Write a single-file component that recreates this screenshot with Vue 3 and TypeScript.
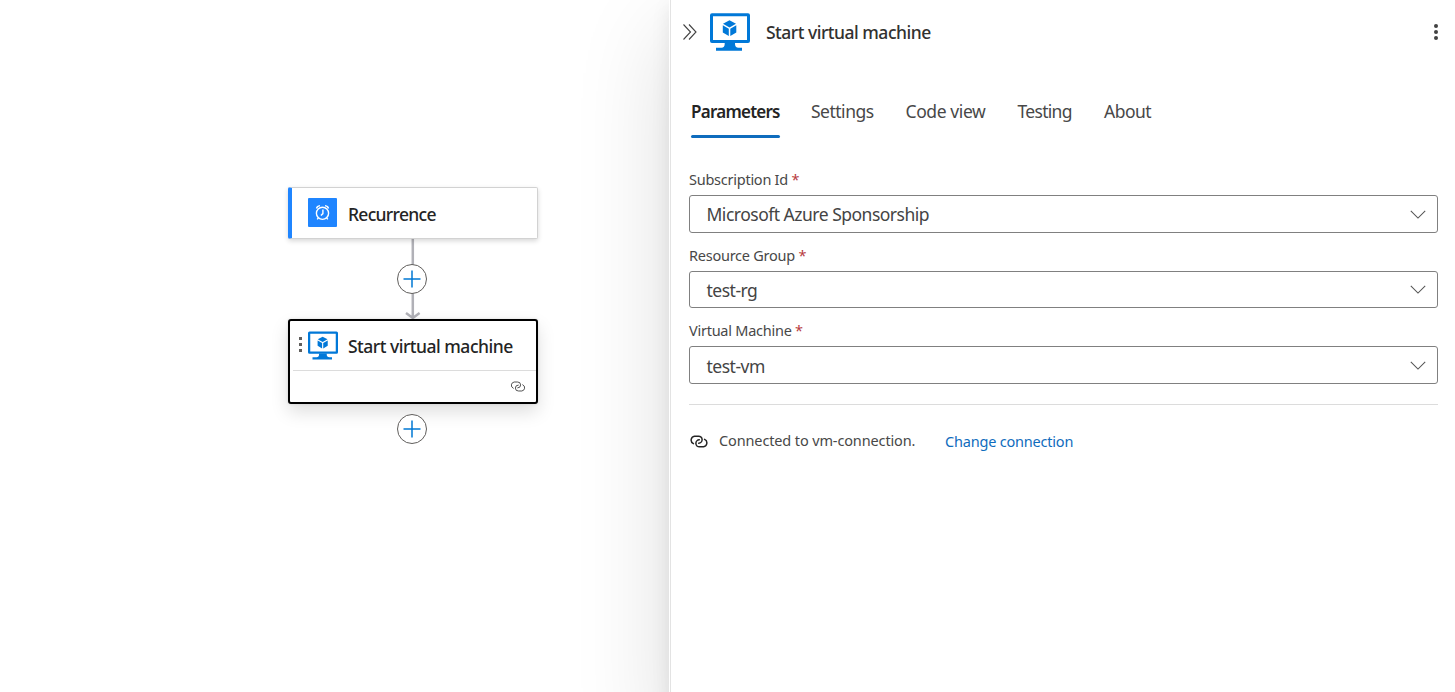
<script setup lang="ts">
interface Tab { label: string; cls: string }
interface Field { label: string; value: string; cls: string }

const tabs: Tab[] = [
  { label: 'Parameters', cls: 'parameters' },
  { label: 'Settings', cls: 'settings' },
  { label: 'Code view', cls: 'code' },
  { label: 'Testing', cls: 'testing' },
  { label: 'About', cls: 'about' },
]
const fields: Field[] = [
  { label: 'Subscription Id', value: 'Microsoft Azure Sponsorship', cls: 'subscription' },
  { label: 'Resource Group', value: 'test-rg', cls: 'group' },
  { label: 'Virtual Machine', value: 'test-vm', cls: 'machine' },
]
</script>

<template>
  <svg class="defs" width="0" height="0" aria-hidden="true">
    <symbol id="vm" viewBox="0 0 40 38">
      <path fill="#0078d8" fill-rule="evenodd" d="M2 0.300H38Q40 0.300 40 2.300V28Q40 30 38 30H2Q0 30 0 28V2.300Q0 0.300 2 0.300ZM3 3.200V27H37V3.200Z" />
      <path fill="#0078d8" d="M14.700 29.500H25V31Q25 34.700 28.500 34.700H32V37.800H6V34.700H11.500Q14.700 34.700 14.700 31Z" />
      <path fill="#0078d8" d="M19.500 7.200L26 10.800L19.500 14.400L13 10.800ZM12.800 12.300L18.800 15.800V22.900L12.800 19.400ZM26.300 12.300L20.300 15.800V22.900L26.300 19.400Z" />
    </symbol>
    <symbol id="link" viewBox="0 0 18 13">
      <g fill="none" stroke="currentColor" stroke-linecap="round">
        <path d="M3.400 8.600A3.900 3.900 0 0 1 4.500 1.200H8.500A3.400 3.400 0 0 1 8.700 8.200" />
        <path d="M14.600 4.400A3.900 3.900 0 0 1 13.500 11.800H9.500A3.400 3.400 0 0 1 9.300 4.800" />
      </g>
    </symbol>
    <symbol id="plus" viewBox="0 0 18 18">
      <path d="M9 0.500V17.500M0.500 9H17.500" fill="none" stroke="#0078d4" stroke-width="1.500" />
    </symbol>
  </svg>

  <div class="app">
    <main class="canvas">
      <svg class="edge" width="20" height="82" viewBox="0 0 20 82">
        <path d="M9.800 0V79M3 74L9.800 79L16.600 74" fill="none" stroke="#b1b1b7" stroke-width="2.500" />
      </svg>
      <div class="node recurrence">
        <span class="trigger">
          <svg width="29" height="29" viewBox="0 0 29 29" fill="none" stroke="#fff" stroke-width="1.400">
            <circle cx="14.500" cy="15.300" r="6.100" />
            <path d="M14.900 11.500V15.600L12.900 17.600M8.500 10.500Q9 8 12 7.600M17 7.600Q20 8 20.500 10.500M10.400 19.800L9.200 21.400M18.600 19.800L19.800 21.400" />
          </svg>
        </span>
        <span class="title t-rec">Recurrence</span>
      </div>
      <button class="add first"><svg width="18" height="18"><use href="#plus" /></svg></button>
      <div class="node vm">
        <div class="node-main">
          <span class="grip"><i /><i /><i /></span>
          <svg class="vm-small" width="30" height="29"><use href="#vm" /></svg>
          <span class="title t-vm">Start virtual machine</span>
        </div>
        <div class="node-foot"><svg width="16" height="11"><use href="#link" /></svg></div>
      </div>
      <button class="add second"><svg width="18" height="18"><use href="#plus" /></svg></button>
    </main>

    <aside class="panel">
      <header class="head">
        <svg class="collapse" width="14" height="16" viewBox="0 0 14 16" fill="none" stroke="#424242" stroke-width="1.100">
          <path d="M0.500 0.500L7.500 8L0.500 15.500M6 0.500L13 8L6 15.500" />
        </svg>
        <svg class="vm-large" width="40" height="38"><use href="#vm" /></svg>
        <span class="title t-head">Start virtual machine</span>
        <span class="more"><i /><i /><i /></span>
      </header>
      <nav class="tabs">
        <a v-for="(t, i) in tabs" :key="t.label" class="tab" :class="[t.cls, { active: i === 0 }]">{{ t.label }}</a>
      </nav>
      <section class="form">
        <div v-for="f in fields" :key="f.label" class="field" :class="f.cls">
          <label><span class="name">{{ f.label }}</span><b>*</b></label>
          <div class="select">
            <span class="value">{{ f.value }}</span>
            <svg width="16" height="9" viewBox="0 0 16 9" fill="none" stroke="#555" stroke-width="1.050"><path d="M0.800 0.800L8 8L15.200 0.800" /></svg>
          </div>
        </div>
      </section>
      <footer class="connection">
        <svg class="bold-link" width="18" height="13"><use href="#link" /></svg>
        <span class="status">Connected to vm-connection.</span>
        <a class="change">Change connection</a>
      </footer>
    </aside>
  </div>
</template>

<style>
body { margin: 0; overflow: hidden; }
</style>

<style scoped>
.defs { position: absolute; }
.app { position: relative; z-index: 0; display: flex; width: 1455px; height: 692px; overflow: hidden; background: #fff; font-family: "Noto Sans", "Open Sans", sans-serif; color: #323130; }
.canvas { position: relative; flex: 0 0 669px; }
svg { display: block; flex: none; }
.title { font-size: 17.5px; font-weight: 500; line-height: 24px; white-space: nowrap; color: #242424; letter-spacing: -0.5px; }
.node { position: absolute; box-sizing: border-box; left: 288px; width: 250px; background: #fff; }
.recurrence { top: 187px; height: 52px; display: flex; align-items: center; padding-left: 16px; border: 1px solid #d2d2d2; border-left: 4px solid #1f85ff; border-radius: 2px; box-shadow: 0 2px 5px rgba(0,0,0,.16); }
.trigger { width: 29px; height: 29px; margin: 0 1px 2px 0; background: #1f85ff; border-radius: 1px; }
.recurrence .title { margin: 1px 0 0 10px; letter-spacing: -0.7px; }
.edge { position: absolute; left: 403px; top: 239px; }
.add { position: absolute; left: 397.4px; width: 30px; height: 30px; box-sizing: border-box; padding: 0; display: grid; place-items: center; border: 1px solid #605e5c; border-radius: 50%; background: #fff; }
.first { top: 264px; }
.second { top: 414px; }
.vm { top: 319px; height: 85px; border: 2px solid #000; border-radius: 3px; box-shadow: 0 8px 18px rgba(0,0,0,.13), 0 0 3px rgba(0,0,0,.12); }
.node-main { display: flex; height: 49px; margin-left: 3px; border-bottom: 1px solid #dcdcdc; }
.grip { display: grid; gap: 3px; align-content: start; width: 3px; margin: 16px 0 0 5.5px; }
.grip i { width: 3px; height: 3px; background: #605e5c; }
.vm-small { margin: 9.5px 10px 0 6.5px; }
.node-main .title { margin-top: 13px; }
.node-foot { display: flex; justify-content: flex-end; padding: 10px 10px 0; color: #333; }

.panel { position: relative; z-index: 0; flex: 1; box-sizing: border-box; padding-left: 20px; background: linear-gradient(to right, #fff 1px, #e3e3e3 1px, #e3e3e3 2px, #fff 2px); }
.panel::before { content: ""; position: absolute; inset: 0 0 -30px 0; z-index: -1; box-shadow: 0 32px 90px rgba(0,0,0,.14), 0 6px 18px rgba(0,0,0,.08); }
.head { display: flex; height: 88px; align-items: flex-start; }
.collapse { margin: 24px 0 0 -6px; }
.vm-large { margin: 13px 16px 0 13px; }
.head .title { margin-top: 20px; color: #323130; }
.more { display: grid; gap: 2px; margin: 24px 17px 0 auto; }
.more i { width: 4px; height: 4px; border-radius: 50%; background: #424242; }
.tabs { display: flex; height: 50px; margin-left: 2px; }
.tab { position: relative; box-sizing: border-box; font-size: 17.5px; line-height: 47px; color: #484848; white-space: nowrap; letter-spacing: -0.5px; }
.parameters { width: 120px; font-size: 17px; font-weight: 600; color: #242424; letter-spacing: -0.75px; }
.parameters::after { content: ""; position: absolute; left: 0; bottom: 0; width: 89px; height: 3px; border-radius: 2px; background: #0f6cbd; }
.settings { width: 94.5px; }
.code { width: 112px; letter-spacing: -0.4px; }
.testing { width: 86.5px; letter-spacing: -0.7px; }
.form { width: 749px; margin-top: 31px; padding-bottom: 20px; border-bottom: 1px solid #dcdcdc; }
.field { height: 76px; }
.group { height: 75px; }
.machine { height: 64px; }
label { display: flex; height: 26px; font-size: 14.5px; line-height: 21px; color: #484848; letter-spacing: -0.25px; }
b { margin-left: 3.500px; font-weight: 400; color: #b73a40; }
.select { box-sizing: border-box; display: flex; height: 38px; align-items: center; justify-content: space-between; padding: 0 12px 0 16.500px; border: 1px solid #808080; border-radius: 3px; }
.group .select { height: 37px; }
.value { font-size: 17.5px; line-height: 24px; margin-top: -1px; letter-spacing: -0.5px; color: #444; }
.group .value { margin-top: 0; }
.machine .value { margin-top: 1px; }
.select svg { margin-right: -0.5px; }
.connection { display: flex; align-items: flex-start; padding: 25px 0 0 1px; font-size: 14.5px; line-height: 20px; color: #484848; letter-spacing: -0.13px; }
.bold-link { margin-top: 5px; color: #242424; stroke-width: 1.5; }
.status { width: 226px; margin-left: 11px; }
.change { margin-top: 1px; color: #0f6cbd; letter-spacing: -0.2px; }
</style>
